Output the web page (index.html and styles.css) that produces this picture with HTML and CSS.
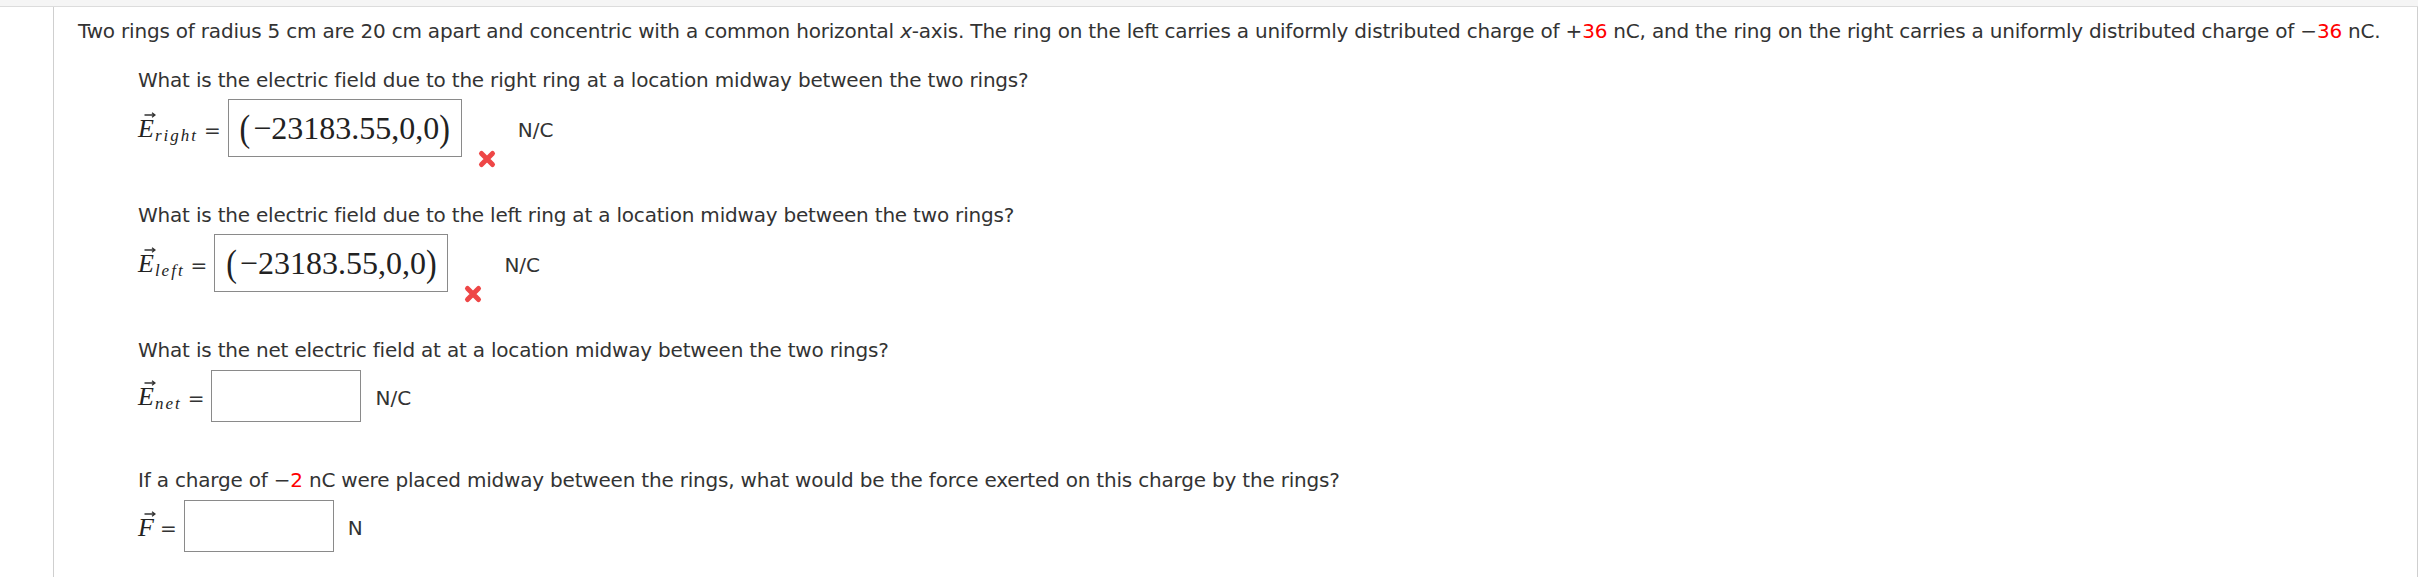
FILE: index.html
```html
<!DOCTYPE html>
<html lang="en">
<head>
    <meta charset="UTF-8">
    <title>Charged Rings</title>
    <link rel="stylesheet" href="styles.css">
</head>
<body>
    <div class="topbar"></div>

    <div class="panel">
        <p class="intro">Two rings of radius 5 cm are 20 cm apart and concentric with a common horizontal <i>x</i>-axis. The ring on the left carries a uniformly distributed charge of +<span class="red">36</span> nC, and the ring on the right carries a uniformly distributed charge of &minus;<span class="red">36</span> nC.</p>

        <!-- parte 1 -->
        <div class="part first">
            <p class="prompt">What is the electric field due to the right ring at a location midway between the two rings?</p>
            <div class="answer-row filled-row">
                <span class="label"><span class="vec">E<svg class="arrow" viewBox="0 0 12 6"><path d="M0.5 3H10.5M8 0.8L11 3L8 5.2" /></svg></span><span class="sub">right</span></span>
                <span class="eq">=</span>
                <div class="answer-box filled"><span class="math"><span class="paren open">(</span>&minus;23183.55,0,0<span class="paren">)</span></span></div>
                <svg class="wrong" viewBox="0 0 20 20"><path d="M4.5 4.5L15.5 15.5M15.5 4.5L4.5 15.5" /></svg>
                <span class="unit after-mark">N/C</span>
            </div>
        </div>

        <!-- parte 2 -->
        <div class="part">
            <p class="prompt">What is the electric field due to the left ring at a location midway between the two rings?</p>
            <div class="answer-row filled-row">
                <span class="label"><span class="vec">E<svg class="arrow" viewBox="0 0 12 6"><path d="M0.5 3H10.5M8 0.8L11 3L8 5.2" /></svg></span><span class="sub">left</span></span>
                <span class="eq">=</span>
                <div class="answer-box filled"><span class="math"><span class="paren open">(</span>&minus;23183.55,0,0<span class="paren">)</span></span></div>
                <svg class="wrong" viewBox="0 0 20 20"><path d="M4.5 4.5L15.5 15.5M15.5 4.5L4.5 15.5" /></svg>
                <span class="unit after-mark">N/C</span>
            </div>
        </div>

        <!-- parte 3 -->
        <div class="part">
            <p class="prompt">What is the net electric field at at a location midway between the two rings?</p>
            <div class="answer-row">
                <span class="label"><span class="vec">E<svg class="arrow" viewBox="0 0 12 6"><path d="M0.5 3H10.5M8 0.8L11 3L8 5.2" /></svg></span><span class="sub">net</span></span>
                <span class="eq">=</span>
                <div class="answer-box"></div>
                <span class="unit">N/C</span>
            </div>
        </div>

        <!-- parte 4 -->
        <div class="part">
            <p class="prompt">If a charge of &minus;<span class="red">2</span> nC were placed midway between the rings, what would be the force exerted on this charge by the rings?</p>
            <div class="answer-row">
                <span class="label"><span class="vec">F<svg class="arrow" viewBox="0 0 12 6"><path d="M0.5 3H10.5M8 0.8L11 3L8 5.2" /></svg></span></span>
                <span class="eq">=</span>
                <div class="answer-box"></div>
                <span class="unit">N</span>
            </div>
        </div>
    </div>
</body>
</html>
```

FILE: styles.css
```css
* {
    margin: 0;
    padding: 0;
    box-sizing: border-box;
}

body {
    background: #fff;
    color: #333;
    font-family: 'DejaVu Sans', Verdana, sans-serif;
    font-size: 20px;
    line-height: 23px;
}

.topbar {
    width: 2418px;
    height: 7px;
    background: #f5f5f5;
    border-bottom: 1px solid #dcdcdc;
}

.panel {
    margin-left: 53px;
    width: 2365px;
    min-height: 570px;
    padding: 13px 0 0 24px;
    border-left: 1px solid #cfcfcf;
    border-right: 1px solid #cfcfcf;
}

.intro,
.prompt {
    letter-spacing: -0.2px;
    white-space: nowrap;
}

.red {
    color: #f00;
}

.part {
    margin-top: 47px;
    padding-left: 60px;
}

.part.first {
    margin-top: 26px;
}

.answer-row {
    display: flex;
    align-items: center;
    margin-top: 8px;
}

.answer-row.filled-row {
    margin-top: 7px;
}

.label {
    font-family: 'Liberation Serif', 'Times New Roman', serif;
    font-style: italic;
    color: #222;
    font-size: 26px;
    line-height: 23px;
    padding-top: 3px;
    margin-right: 6px;
    white-space: nowrap;
}

.vec {
    position: relative;
}

.arrow {
    position: absolute;
    left: 6px;
    top: -2px;
    width: 12px;
    height: 6px;
    fill: none;
    stroke: #333;
    stroke-width: 1.3;
}

.sub {
    font-size: 17px;
    letter-spacing: 2px;
    position: relative;
    top: 4px;
    margin-left: 1px;
}

.eq {
    margin-right: 7px;
    padding-top: 5px;
}

.answer-box {
    width: 150px;
    height: 52px;
    border: 1px solid #8a8a8a;
    background: #fff;
}

.answer-box.filled {
    width: 234px;
    height: 58px;
    display: flex;
    align-items: center;
    justify-content: center;
}

.math {
    font-family: 'Liberation Serif', 'Times New Roman', serif;
    font-size: 32px;
    line-height: normal;
    color: #222;
    white-space: nowrap;
}

.paren {
    display: inline-block;
    transform: scaleY(1.18);
}

.paren.open {
    margin-right: 3px;
}

.wrong {
    width: 20px;
    height: 20px;
    align-self: flex-end;
    margin: 0 0 -12px 15px;
    fill: none;
    stroke: #ee4646;
    stroke-width: 5;
    stroke-linecap: round;
}

.unit {
    margin-left: 14px;
    padding-top: 5px;
}

.unit.after-mark {
    margin-left: 21px;
}
```
